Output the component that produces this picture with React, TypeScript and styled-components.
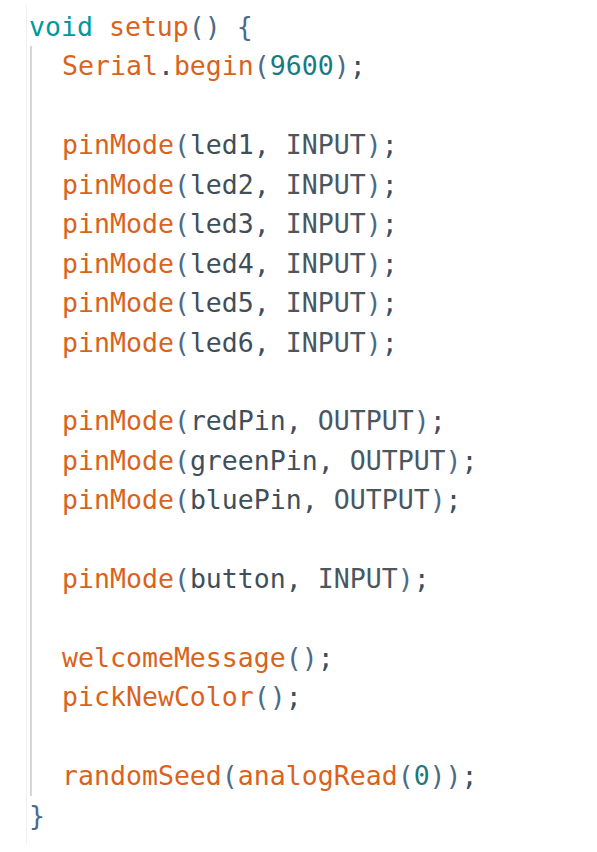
import React from "react";
import styled, { createGlobalStyle } from "styled-components";

const Global = createGlobalStyle`
  html, body { margin: 0; padding: 0; background: #ffffff; }
  body { width: 597px; height: 852px; overflow: hidden; }
`;

const Page = styled.div`
  padding: 5px 0 0 26px;
  height: 852px;
  box-sizing: border-box;
`;

const Editor = styled.div`
  border-left: 1px solid #f1f1f1;
  height: 840px;
  padding-top: 2px;
  box-sizing: border-box;
  font-family: "DejaVu Sans Mono", "Liberation Mono", monospace;
  font-size: 26.55px;
  color: #434f54;
`;

const Line = styled.div`
  height: 39.45px;
  line-height: 39.45px;
  white-space: pre;
  padding-left: 2px;
`;

const Block = styled.div`
  margin-left: 3px;
  border-left: 2px solid #d6d6d6;
  padding-left: 30px;
  & > div { padding-left: 0; }
`;

type Kind = "kw" | "fn" | "p" | "id" | "num" | "const";

const colors: Record<Kind, string> = {
  kw: "#00979d",
  fn: "#d9631c",
  p: "#4d6b86",
  id: "#3f4f5a",
  num: "#1a7a80",
  const: "#4a575f",
};

const Tok = styled.span<{ $k: Kind }>`
  color: ${(p) => colors[p.$k]};
`;

type T = [Kind, string];

const pin = (a: string, b: string): T[] => [
  ["fn", "pinMode"],
  ["p", "("],
  ["id", a + ", "],
  ["const", b],
  ["p", ")"],
  ["id", ";"],
];

const body: T[][] = [
  [["fn", "Serial"], ["id", "."], ["fn", "begin"], ["p", "("], ["num", "9600"], ["p", ")"], ["id", ";"]],
  [],
  pin("led1", "INPUT"),
  pin("led2", "INPUT"),
  pin("led3", "INPUT"),
  pin("led4", "INPUT"),
  pin("led5", "INPUT"),
  pin("led6", "INPUT"),
  [],
  pin("redPin", "OUTPUT"),
  pin("greenPin", "OUTPUT"),
  pin("bluePin", "OUTPUT"),
  [],
  pin("button", "INPUT"),
  [],
  [["fn", "welcomeMessage"], ["p", "()"], ["id", ";"]],
  [["fn", "pickNewColor"], ["p", "()"], ["id", ";"]],
  [],
  [["fn", "randomSeed"], ["p", "("], ["fn", "analogRead"], ["p", "("], ["num", "0"], ["p", "))"], ["id", ";"]],
];

const CodeLine = ({ toks }: { toks: T[] }) => (
  <Line>
    {toks.length === 0 ? " " : toks.map(([k, s], i) => <Tok key={i} $k={k}>{s}</Tok>)}
  </Line>
);

export default function App() {
  return (
    <>
      <Global />
      <Page>
        <Editor>
          <CodeLine toks={[["kw", "void"], ["id", " "], ["fn", "setup"], ["p", "()"], ["id", " "], ["p", "{"]]} />
          <Block>
            {body.map((t, i) => (
              <CodeLine key={i} toks={t} />
            ))}
          </Block>
          <CodeLine toks={[["p", "}"]]} />
        </Editor>
      </Page>
    </>
  );
}
